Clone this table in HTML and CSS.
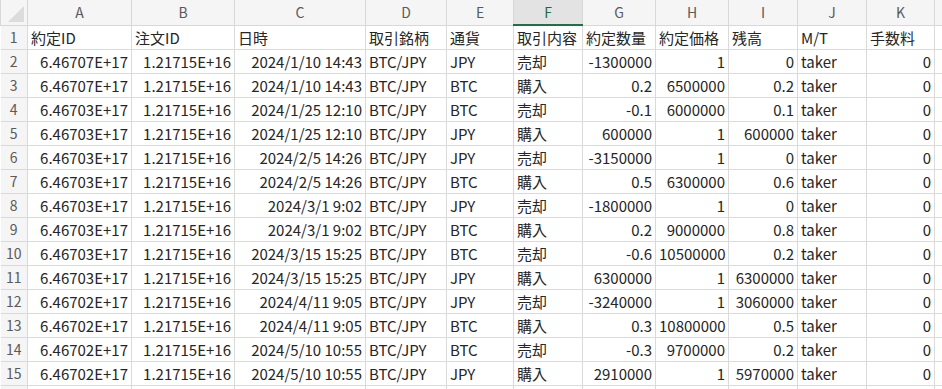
FILE: index.html
```html
<!DOCTYPE html>
<html lang="ja">
<head>
    <meta charset="UTF-8">
    <title>約定履歴</title>
    <link rel="stylesheet" href="styles.css">
</head>
<body>

    <!-- Sheet grid -->
    <table class="sheet">
        <colgroup>
            <col class="w-rh"><col class="w-a"><col class="w-b"><col class="w-c"><col class="w-d"><col class="w-e">
            <col class="w-f"><col class="w-g"><col class="w-h"><col class="w-i"><col class="w-j"><col class="w-k"><col class="w-l">
        </colgroup>
        <tr class="colhead">
            <th class="corner"><span class="tri"></span></th>
            <th>A</th><th>B</th><th>C</th><th>D</th><th>E</th><th class="sel">F</th><th>G</th><th>H</th><th>I</th><th>J</th><th>K</th><th></th>
        </tr>
        <tr><th class="rh">1</th><td>約定ID</td><td>注文ID</td><td>日時</td><td>取引銘柄</td><td>通貨</td><td>取引内容</td><td>約定数量</td><td>約定価格</td><td>残高</td><td>M/T</td><td>手数料</td><td></td></tr>
        <tr><th class="rh">2</th><td class="num">6.46707E+17</td><td class="num">1.21715E+16</td><td class="num">2024/1/10 14:43</td><td>BTC/JPY</td><td>JPY</td><td>売却</td><td class="num">-1300000</td><td class="num">1</td><td class="num">0</td><td>taker</td><td class="num">0</td><td></td></tr>
        <tr><th class="rh">3</th><td class="num">6.46707E+17</td><td class="num">1.21715E+16</td><td class="num">2024/1/10 14:43</td><td>BTC/JPY</td><td>BTC</td><td>購入</td><td class="num">0.2</td><td class="num">6500000</td><td class="num">0.2</td><td>taker</td><td class="num">0</td><td></td></tr>
        <tr><th class="rh">4</th><td class="num">6.46703E+17</td><td class="num">1.21715E+16</td><td class="num">2024/1/25 12:10</td><td>BTC/JPY</td><td>BTC</td><td>売却</td><td class="num">-0.1</td><td class="num">6000000</td><td class="num">0.1</td><td>taker</td><td class="num">0</td><td></td></tr>
        <tr><th class="rh">5</th><td class="num">6.46703E+17</td><td class="num">1.21715E+16</td><td class="num">2024/1/25 12:10</td><td>BTC/JPY</td><td>JPY</td><td>購入</td><td class="num">600000</td><td class="num">1</td><td class="num">600000</td><td>taker</td><td class="num">0</td><td></td></tr>
        <tr><th class="rh">6</th><td class="num">6.46703E+17</td><td class="num">1.21715E+16</td><td class="num">2024/2/5 14:26</td><td>BTC/JPY</td><td>JPY</td><td>売却</td><td class="num">-3150000</td><td class="num">1</td><td class="num">0</td><td>taker</td><td class="num">0</td><td></td></tr>
        <tr><th class="rh">7</th><td class="num">6.46703E+17</td><td class="num">1.21715E+16</td><td class="num">2024/2/5 14:26</td><td>BTC/JPY</td><td>BTC</td><td>購入</td><td class="num">0.5</td><td class="num">6300000</td><td class="num">0.6</td><td>taker</td><td class="num">0</td><td></td></tr>
        <tr><th class="rh">8</th><td class="num">6.46703E+17</td><td class="num">1.21715E+16</td><td class="num">2024/3/1 9:02</td><td>BTC/JPY</td><td>JPY</td><td>売却</td><td class="num">-1800000</td><td class="num">1</td><td class="num">0</td><td>taker</td><td class="num">0</td><td></td></tr>
        <tr><th class="rh">9</th><td class="num">6.46703E+17</td><td class="num">1.21715E+16</td><td class="num">2024/3/1 9:02</td><td>BTC/JPY</td><td>BTC</td><td>購入</td><td class="num">0.2</td><td class="num">9000000</td><td class="num">0.8</td><td>taker</td><td class="num">0</td><td></td></tr>
        <tr><th class="rh">10</th><td class="num">6.46703E+17</td><td class="num">1.21715E+16</td><td class="num">2024/3/15 15:25</td><td>BTC/JPY</td><td>BTC</td><td>売却</td><td class="num">-0.6</td><td class="num">10500000</td><td class="num">0.2</td><td>taker</td><td class="num">0</td><td></td></tr>
        <tr><th class="rh">11</th><td class="num">6.46703E+17</td><td class="num">1.21715E+16</td><td class="num">2024/3/15 15:25</td><td>BTC/JPY</td><td>JPY</td><td>購入</td><td class="num">6300000</td><td class="num">1</td><td class="num">6300000</td><td>taker</td><td class="num">0</td><td></td></tr>
        <tr><th class="rh">12</th><td class="num">6.46702E+17</td><td class="num">1.21715E+16</td><td class="num">2024/4/11 9:05</td><td>BTC/JPY</td><td>JPY</td><td>売却</td><td class="num">-3240000</td><td class="num">1</td><td class="num">3060000</td><td>taker</td><td class="num">0</td><td></td></tr>
        <tr><th class="rh">13</th><td class="num">6.46702E+17</td><td class="num">1.21715E+16</td><td class="num">2024/4/11 9:05</td><td>BTC/JPY</td><td>BTC</td><td>購入</td><td class="num">0.3</td><td class="num">10800000</td><td class="num">0.5</td><td>taker</td><td class="num">0</td><td></td></tr>
        <tr><th class="rh">14</th><td class="num">6.46702E+17</td><td class="num">1.21715E+16</td><td class="num">2024/5/10 10:55</td><td>BTC/JPY</td><td>BTC</td><td>売却</td><td class="num">-0.3</td><td class="num">9700000</td><td class="num">0.2</td><td>taker</td><td class="num">0</td><td></td></tr>
        <tr><th class="rh">15</th><td class="num">6.46702E+17</td><td class="num">1.21715E+16</td><td class="num">2024/5/10 10:55</td><td>BTC/JPY</td><td>JPY</td><td>購入</td><td class="num">2910000</td><td class="num">1</td><td class="num">5970000</td><td>taker</td><td class="num">0</td><td></td></tr>
        <!-- next row only peeks in at the bottom edge -->
        <tr><th class="rh"></th><td></td><td></td><td></td><td></td><td></td><td></td><td></td><td></td><td></td><td></td><td></td><td></td></tr>
    </table>

</body>
</html>
```
FILE: styles.css
```css
body {
    margin: 0;
    background-color: #fff;
    font-family: "Noto Sans CJK JP", "Noto Sans", sans-serif;
    font-size: 15px;
    color: #262626;
    overflow: hidden;
}
.sheet {
    border-collapse: collapse;
    table-layout: fixed;
    width: 954px;
}
/* column widths, measured off the sheet */
.w-rh { width: 27px; }
.w-a { width: 104px; }
.w-b { width: 103px; }
.w-c { width: 131px; }
.w-d { width: 81px; }
.w-e { width: 67px; }
.w-f { width: 69px; }
.w-g { width: 73px; }
.w-h { width: 73px; }
.w-i { width: 69px; }
.w-j { width: 69px; }
.w-k { width: 68px; }
.w-l { width: 20px; }
td, th {
    border: 1px solid #dadada;
    padding: 0 3px;
    height: 23px;
    white-space: nowrap;
    overflow: hidden;
    line-height: 23px;
    font-weight: normal;
    text-align: left;
}
td.num {
    text-align: right;
}
.colhead th {
    height: 24px;
    background-color: #f5f5f5;
    color: #5a5a5a;
    font-size: 14px;
    text-align: center;
    border-color: #d8d8d8;
    border-top: none;
}
.colhead th.sel {
    background-color: #e3e3e3;
    color: #1f6b3c;
    border-bottom: 2px solid #1e7145;
}
.corner {
    position: relative;
}
/* small triangle in the top-left corner */
.corner .tri {
    position: absolute;
    right: 3px;
    bottom: 3px;
    width: 0;
    height: 0;
    border-left: 16px solid transparent;
    border-bottom: 16px solid #dcdcdc;
}
th.rh {
    background-color: #f5f5f5;
    color: #5a5a5a;
    font-size: 14px;
    text-align: center;
    padding: 0;
    border-left: none;
}
```
